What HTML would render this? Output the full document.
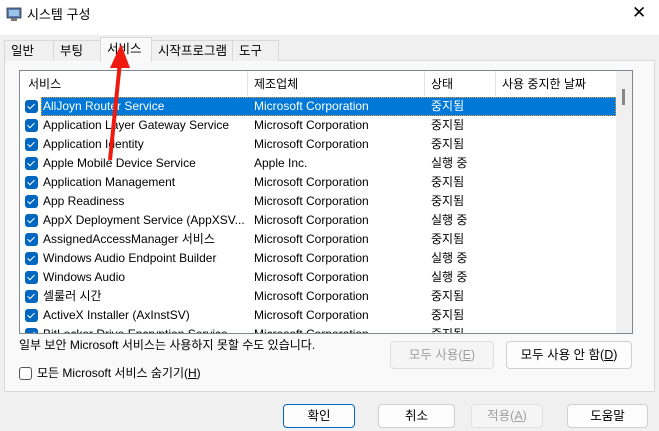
<!DOCTYPE html>
<html><head><meta charset="utf-8"><style>
*{margin:0;padding:0;box-sizing:border-box}
body{width:659px;height:431px;overflow:hidden;background:#f0f0f0;font-family:"Liberation Sans","Noto Sans CJK KR",sans-serif;font-size:12px;line-height:15px;color:#000;position:relative}
.a{position:absolute;white-space:nowrap}
.title{left:0;top:0;width:659px;height:35px;background:#fff}
.tab{top:40px;height:21px;border:1px solid #d9d9d9;border-bottom:none;background:#f0f0f0;padding:3px 0 0 6px;font-size:12.5px}
.panel{left:4px;top:60px;width:651px;height:332px;border:1px solid #d9d9d9;background:#f9f9f9}
.list{left:19px;top:70px;width:614px;height:264px;border:1px solid #828790;background:#fff;overflow:hidden}
.hdr{top:0;height:26px;width:596px;background:#fff}
.hdr span{position:absolute;top:6px}
.sep{position:absolute;top:0;width:1px;height:25px;background:#e5e5e5}
.row{position:absolute;left:0;width:596px;height:19px}
.row span{position:absolute;top:2px}
.cb{position:absolute;left:5px;top:3px;width:13px;height:13px;background:#0067c0;border-radius:3px}
.cb:after{content:"";position:absolute;left:4px;top:1.5px;width:3px;height:6px;border:solid #fff;border-width:0 1.3px 1.3px 0;transform:rotate(45deg)}
.sel{background:#0078d7;color:#fff;outline:1px dotted #f0a030;outline-offset:-1px}
.btn{border:1px solid #d0d0d0;background:#fdfdfd;border-radius:4px;text-align:center;font-size:12.5px}
.dis{color:#a0a0a0;background:#f5f5f5;border-color:#e0e0e0}
</style></head><body>
<div class="a title"></div>
<svg class="a" style="left:6px;top:6px" width="16" height="16"><rect x="1" y="2" width="14" height="10" fill="#5b7bb0" stroke="#333" stroke-width=".8"/><rect x="3" y="4" width="10" height="6" fill="#9cc4ea"/><rect x="5" y="12" width="6" height="3" fill="#777"/></svg>
<div class="a" style="left:27px;top:7px;font-size:13px">시스템 구성</div>
<div class="a" style="left:632px;top:3px;font-size:17px;line-height:20px;font-weight:300">✕</div>
<div class="a panel"></div>
<div class="a tab" style="left:4px;width:50px">일반</div>
<div class="a tab" style="left:53px;width:48px">부팅</div>
<div class="a tab" style="left:100px;width:52px;top:37px;height:25px;padding-top:4px;background:#f9f9f9;border-color:#d9d9d9">서비스</div>
<div class="a tab" style="left:151px;width:82px">시작프로그램</div>
<div class="a tab" style="left:232px;width:47px">도구</div>
<div class="a list">
 <div class="a hdr"><span style="left:8px">서비스</span><div class="sep" style="left:227px"></div><span style="left:234px">제조업체</span><div class="sep" style="left:404px"></div><span style="left:411px">상태</span><div class="sep" style="left:475px"></div><span style="left:482px">사용 중지한 날짜</span></div>
 <div class="a" style="left:596px;top:0;width:17px;height:262px;background:#f0f0f0"><div style="position:absolute;left:6px;top:18px;width:3px;height:16px;background:#888"></div></div>
 <div class="row" style="top:26px"><div class="cb"></div><span class="sel" style="left:21px;top:0;height:19px;width:575px;padding:2px 0 0 2px">AllJoyn Router Service</span><span style="left:234px;color:#fff">Microsoft Corporation</span><span style="left:411px;color:#fff">중지됨</span></div>
 <div class="row" style="top:45px"><div class="cb"></div><span style="left:23px">Application Layer Gateway Service</span><span style="left:234px">Microsoft Corporation</span><span style="left:411px">중지됨</span></div>
 <div class="row" style="top:64px"><div class="cb"></div><span style="left:23px">Application Identity</span><span style="left:234px">Microsoft Corporation</span><span style="left:411px">중지됨</span></div>
 <div class="row" style="top:83px"><div class="cb"></div><span style="left:23px">Apple Mobile Device Service</span><span style="left:234px">Apple Inc.</span><span style="left:411px">실행 중</span></div>
 <div class="row" style="top:102px"><div class="cb"></div><span style="left:23px">Application Management</span><span style="left:234px">Microsoft Corporation</span><span style="left:411px">중지됨</span></div>
 <div class="row" style="top:121px"><div class="cb"></div><span style="left:23px">App Readiness</span><span style="left:234px">Microsoft Corporation</span><span style="left:411px">중지됨</span></div>
 <div class="row" style="top:140px"><div class="cb"></div><span style="left:23px">AppX Deployment Service (AppXSV...</span><span style="left:234px">Microsoft Corporation</span><span style="left:411px">실행 중</span></div>
 <div class="row" style="top:159px"><div class="cb"></div><span style="left:23px">AssignedAccessManager 서비스</span><span style="left:234px">Microsoft Corporation</span><span style="left:411px">중지됨</span></div>
 <div class="row" style="top:178px"><div class="cb"></div><span style="left:23px">Windows Audio Endpoint Builder</span><span style="left:234px">Microsoft Corporation</span><span style="left:411px">실행 중</span></div>
 <div class="row" style="top:197px"><div class="cb"></div><span style="left:23px">Windows Audio</span><span style="left:234px">Microsoft Corporation</span><span style="left:411px">실행 중</span></div>
 <div class="row" style="top:216px"><div class="cb"></div><span style="left:23px">셀룰러 시간</span><span style="left:234px">Microsoft Corporation</span><span style="left:411px">중지됨</span></div>
 <div class="row" style="top:235px"><div class="cb"></div><span style="left:23px">ActiveX Installer (AxInstSV)</span><span style="left:234px">Microsoft Corporation</span><span style="left:411px">중지됨</span></div>
 <div class="row" style="top:254px"><div class="cb"></div><span style="left:23px">BitLocker Drive Encryption Service</span><span style="left:234px">Microsoft Corporation</span><span style="left:411px">중지됨</span></div>
</div>
<div class="a" style="left:19px;top:338px">일부 보안 Microsoft 서비스는 사용하지 못할 수도 있습니다.</div>
<div class="a" style="left:19px;top:367px;width:13px;height:13px;border:1px solid #555;border-radius:3px;background:#fff"></div>
<div class="a" style="left:37px;top:366px">모든 Microsoft 서비스 숨기기(<u>H</u>)</div>
<div class="a btn dis" style="left:390px;top:341px;width:104px;height:28px;padding-top:6px">모두 사용(<u>E</u>)</div>
<div class="a btn" style="left:506px;top:341px;width:126px;height:28px;padding-top:6px">모두 사용 안 함(<u>D</u>)</div>
<div class="a btn" style="left:283px;top:404px;width:72px;height:24px;padding-top:4px;border-color:#0067c0">확인</div>
<div class="a btn" style="left:378px;top:404px;width:77px;height:24px;padding-top:4px">취소</div>
<div class="a btn dis" style="left:471px;top:404px;width:72px;height:24px;padding-top:4px">적용(<u>A</u>)</div>
<div class="a btn" style="left:567px;top:404px;width:81px;height:24px;padding-top:4px">도움말</div>
<svg class="a" style="left:0;top:0" width="659" height="431"><line x1="110" y1="160" x2="120" y2="62" stroke="#f0190f" stroke-width="4"/><polygon points="121,44 110,68 130,68" fill="#f0190f"/></svg>
</body></html>
